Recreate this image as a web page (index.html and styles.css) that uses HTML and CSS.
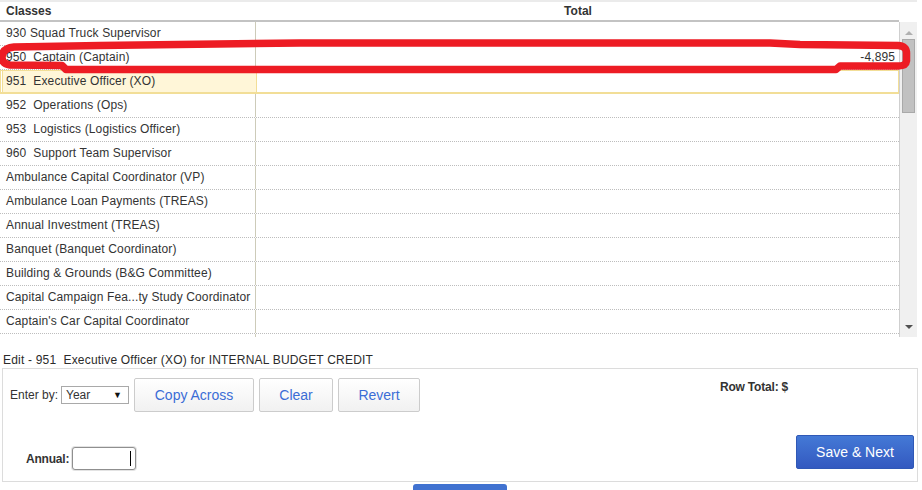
FILE: index.html
```html
<!DOCTYPE html>
<html>
<head>
<meta charset="utf-8">
<link rel="stylesheet" href="styles.css">
</head>
<body>
<div class="page">
  <div class="grid">
    <div class="topband"></div>
    <div class="grid-head">
      <div class="gh-c1">Classes</div>
      <div class="gh-c2">Total</div>
      <div class="gh-sb"></div>
    </div>
    <div class="grid-body">
      <div class="rows">
        <div class="row"><div class="c1">930 Squad Truck Supervisor</div><div class="c2"></div></div>
        <div class="row"><div class="c1">950&nbsp; Captain (Captain)</div><div class="c2">-4,895</div></div>
        <div class="row sel"><div class="c1">951&nbsp; Executive Officer (XO)</div><div class="c2"></div></div>
        <div class="row"><div class="c1">952&nbsp; Operations (Ops)</div><div class="c2"></div></div>
        <div class="row"><div class="c1">953&nbsp; Logistics (Logistics Officer)</div><div class="c2"></div></div>
        <div class="row"><div class="c1">960&nbsp; Support Team Supervisor</div><div class="c2"></div></div>
        <div class="row"><div class="c1">Ambulance Capital Coordinator (VP)</div><div class="c2"></div></div>
        <div class="row"><div class="c1">Ambulance Loan Payments (TREAS)</div><div class="c2"></div></div>
        <div class="row"><div class="c1">Annual Investment (TREAS)</div><div class="c2"></div></div>
        <div class="row"><div class="c1">Banquet (Banquet Coordinator)</div><div class="c2"></div></div>
        <div class="row"><div class="c1">Building &amp; Grounds (B&amp;G Committee)</div><div class="c2"></div></div>
        <div class="row"><div class="c1">Capital Campaign Fea...ty Study Coordinator</div><div class="c2"></div></div>
        <div class="row"><div class="c1">Captain's Car Capital Coordinator</div><div class="c2"></div></div>
        <div class="row"><div class="c1"></div><div class="c2"></div></div>
      </div>
      <div class="scrollbar">
        <div class="sb-arrow sb-up"></div>
        <div class="sb-thumb"></div>
        <div class="sb-track"></div>
        <div class="sb-arrow sb-down"></div>
      </div>
    </div>
  </div>

  <div class="edit-title">Edit - 951&nbsp; Executive Officer (XO) for INTERNAL BUDGET CREDIT</div>

  <div class="panel">
    <div class="panel-left">
      <div class="toolbar">
        <span class="lbl">Enter by:</span>
        <div class="select"><span>Year</span><span class="caret">&#9660;</span></div>
        <button class="btn btn-copy">Copy Across</button>
        <button class="btn btn-clear">Clear</button>
        <button class="btn btn-revert">Revert</button>
      </div>
      <div class="annual">
        <span class="blbl">Annual:</span>
        <div class="input"><span class="cursor"></span></div>
      </div>
    </div>
    <div class="panel-right">
      <div class="row-total">Row Total: $</div>
      <button class="btn-primary">Save &amp; Next</button>
    </div>
  </div>

  <div class="below">
    <div class="btn-partial"></div>
  </div>

  <svg class="annot" width="922" height="490" viewBox="0 0 922 490">
    <path d="M 14 47 L 100 45.5 L 300 43 L 770 43 L 800 44.5 L 898 45.5 Q 907 46 906.5 54 L 906.5 61 Q 906 66 898 66 L 840 66 L 836 69.5 L 66 69.5 L 62 65.5 L 10 65 Q 2 64 2 57 Q 2.5 48 14 47 Z" fill="none" stroke="#ed1c24" stroke-width="7.5" stroke-linejoin="round"/>
  </svg>
</div>
</body>
</html>
```

FILE: styles.css
```css
html, body {
  margin: 0;
  padding: 0;
  overflow: hidden;
  background: #fff;
}
.page {
  position: relative;
  width: 922px;
  height: 490px;
  overflow: hidden;
  font-family: "Liberation Sans", Arial, sans-serif;
  font-size: 12px;
  color: #333;
}
.grid {
  width: 917px;
}
.topband {
  height: 2px;
  background: #ebebeb;
}
.grid-head {
  display: flex;
  height: 20px;
}
.gh-c1 {
  width: 251px;
  padding-left: 6px;
  line-height: 18px;
  font-weight: bold;
  border-bottom: 2px solid #c3c3c3;
}
.gh-c2 {
  width: 642px;
  text-align: center;
  line-height: 18px;
  font-weight: bold;
  border-bottom: 2px solid #c3c3c3;
}
.gh-sb {
  width: 18px;
}
.grid-body {
  display: flex;
  height: 315px;
}
.rows {
  width: 899px;
  height: 315px;
  overflow: hidden;
}
.row {
  display: flex;
  height: 24px;
  box-sizing: border-box;
  border-bottom: 1px dotted #bdbdbd;
}
.row .c1 {
  width: 256px;
  box-sizing: border-box;
  padding-left: 6px;
  line-height: 23px;
  border-right: 1px solid #cdcbb9;
  white-space: nowrap;
  letter-spacing: 0.13px;
}
.row .c2 {
  flex: 1;
  text-align: right;
  padding-right: 4px;
  line-height: 23px;
  letter-spacing: 0.1px;
}
.row.sel {
  box-shadow: inset 0 0 0 1px #f2de97;
  border-bottom: 1px solid #f2de97;
}
.row.sel .c1 {
  background: #fff6d8;
  border: 1px solid #f2de97;
  margin-left: 2px;
  width: 255px;
  padding-left: 3px;
  line-height: 21px;
}
.scrollbar {
  width: 17px;
  border-left: 1px solid #cfcfcf;
  background: #f0f0f0;
  display: flex;
  flex-direction: column;
  align-items: center;
}
.sb-arrow {
  width: 0;
  height: 0;
  border-left: 4px solid transparent;
  border-right: 4px solid transparent;
}
.sb-up {
  margin-top: 9px;
  border-bottom: 4px solid #b0b0b0;
}
.sb-down {
  margin-bottom: 8px;
  border-top: 4px solid #505050;
}
.sb-thumb {
  margin-top: 4px;
  width: 11px;
  height: 72px;
  background: #c1c1c1;
  border: 1px solid #a9a9a9;
}
.sb-track {
  flex: 1;
}
.edit-title {
  margin-top: 15px;
  padding-left: 3px;
  line-height: 16px;
  height: 16px;
  color: #2b2b2b;
  letter-spacing: 0.2px;
  white-space: nowrap;
}
.panel {
  margin-left: 2px;
  width: 916px;
  height: 114px;
  box-sizing: border-box;
  border: 1px solid #dcdcdc;
  padding: 9px 3px 11px 7px;
  display: flex;
  justify-content: space-between;
}
.panel-left {
  display: flex;
  flex-direction: column;
  justify-content: space-between;
}
.toolbar {
  display: flex;
  align-items: center;
  height: 34px;
}
.lbl {
  margin-right: 3px;
}
.select {
  width: 68px;
  height: 18px;
  box-sizing: border-box;
  border: 1px solid #a9a9a9;
  display: flex;
  align-items: center;
  justify-content: space-between;
  padding: 0 6px 0 4px;
  color: #333;
  margin-right: 5px;
}
.caret {
  font-size: 9px;
  color: #111;
}
.btn {
  height: 34px;
  box-sizing: border-box;
  border: 1px solid #cccccc;
  border-radius: 2px;
  background: linear-gradient(#ffffff, #f1f1f1);
  color: #3b6dd6;
  font-family: "Liberation Sans", Arial, sans-serif;
  font-size: 14px;
  padding: 0;
  margin-right: 5px;
}
.btn-copy { width: 120px; }
.btn-clear { width: 74px; }
.btn-revert { width: 82px; }
.annual {
  display: flex;
  align-items: center;
  padding-left: 16px;
}
.blbl {
  font-weight: bold;
  margin-right: 3px;
  letter-spacing: -0.2px;
}
.input {
  width: 64px;
  height: 23px;
  box-sizing: border-box;
  border: 1px solid #8f8f8f;
  border-radius: 3px;
  box-shadow: 0 0 0 1px #e3e3e3;
  background: #fff;
  display: flex;
  align-items: center;
  justify-content: flex-end;
  padding-right: 4px;
}
.cursor {
  width: 1px;
  height: 15px;
  background: #000;
}
.panel-right {
  width: 193px;
  display: flex;
  flex-direction: column;
  justify-content: space-between;
}
.row-total {
  margin-top: 2px;
  margin-left: -1px;
  font-weight: bold;
  line-height: 14px;
  letter-spacing: -0.2px;
}
.btn-primary {
  align-self: flex-end;
  width: 118px;
  height: 34px;
  margin-bottom: 1px;
  border: 1px solid #2f58b6;
  border-radius: 2px;
  background: linear-gradient(#4479d6, #3359c0);
  color: #fff;
  font-family: "Liberation Sans", Arial, sans-serif;
  font-size: 14px;
  padding: 0;
}
.below {
  height: 8px;
  overflow: hidden;
  padding-top: 2px;
  padding-left: 413px;
}
.btn-partial {
  width: 94px;
  height: 30px;
  border-radius: 3px;
  background: #4072d0;
}
.annot {
  position: absolute;
  left: 0;
  top: 0;
  pointer-events: none;
}
```
